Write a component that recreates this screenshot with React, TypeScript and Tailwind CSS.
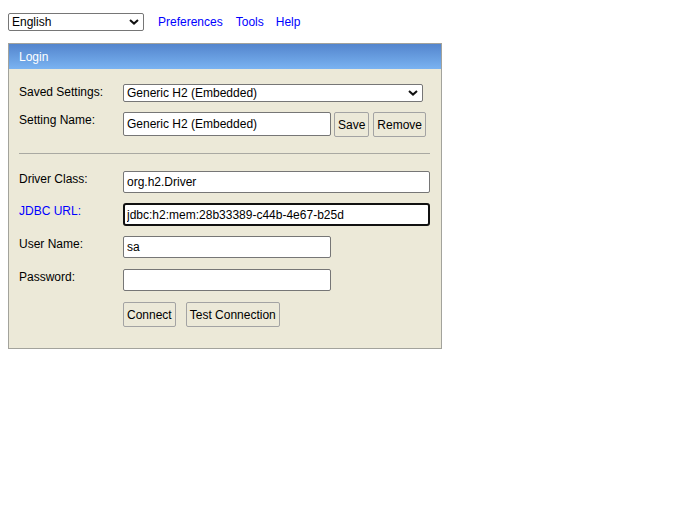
import { useState } from "react";

function Chevron() {
  return (
    <svg
      width="10"
      height="6"
      viewBox="0 0 10 6"
      className="pointer-events-none absolute right-[5px] top-1/2 -translate-y-1/2"
    >
      <path d="M1 1 L5 4.6 L9 1" fill="none" stroke="#111" strokeWidth="2" />
    </svg>
  );
}

function Select({ value, options, className }: { value: string; options: string[]; className: string }) {
  return (
    <div className={`relative ${className}`}>
      <select
        defaultValue={value}
        className="h-full w-full appearance-none rounded-[2px] border border-[#767676] bg-white pl-[3px] pr-5 text-[12px] leading-[14px] text-black outline-none"
      >
        {options.map((o) => (
          <option key={o}>{o}</option>
        ))}
      </select>
      <Chevron />
    </div>
  );
}

function Btn({ label }: { label: string }) {
  return (
    <button className="h-[25px] rounded-[2px] border border-[#a3a3a3] bg-[#ece9d8] px-[3px] text-[12px] leading-[14px] text-black">
      {label}
    </button>
  );
}

function Row({ label, blue, children, className }: { label: string; blue?: boolean; children: React.ReactNode; className?: string }) {
  return (
    <div className={`flex items-start ${className ?? ""}`}>
      <label className={`w-[104px] shrink-0 pt-[1px] text-[12px] leading-[14px] ${blue ? "text-[#0000ff]" : "text-black"}`}>
        {label}
      </label>
      {children}
    </div>
  );
}

export default function App() {
  const [name, setName] = useState("Generic H2 (Embedded)");
  const [driver, setDriver] = useState("org.h2.Driver");
  const [url, setUrl] = useState("jdbc:h2:mem:28b33389-c44b-4e67-b25d");
  const [user, setUser] = useState("sa");
  const [pass, setPass] = useState("");

  const inputCls =
    "h-[22px] rounded-[2px] border border-[#767676] bg-white px-[3px] text-[12px] leading-[14px] text-black outline-none";

  return (
    <div className="min-h-screen bg-white px-2 pt-[13px] font-['Liberation_Sans',Arial,sans-serif] text-[12px] leading-[14px]">
      {/* top bar */}
      <div className="flex items-center">
        <Select value="English" options={["English", "Deutsch", "Français", "Español"]} className="h-[18px] w-[136px]" />
        <a href="#" className="ml-[14px] text-[#0000ff]">Preferences</a>
        <a href="#" className="ml-[13px] text-[#0000ff]">Tools</a>
        <a href="#" className="ml-[12px] text-[#0000ff]">Help</a>
      </div>

      {/* login panel */}
      <div className="mt-[12px] w-[434px] border border-[#a3a39c] bg-[#ece9d8]">
        <div className="flex h-[25px] items-center bg-gradient-to-b from-[#5485cd] to-[#7ab3f1] px-[10px] text-white">
          Login
        </div>

        <div className="pl-[10px] pr-[11px] pt-[15px] pb-[21px]">
          <Row label="Saved Settings:">
            <Select
              value="Generic H2 (Embedded)"
              options={["Generic H2 (Embedded)", "Generic H2 (Server)", "Generic PostgreSQL", "Generic MySQL"]}
              className="h-[18px] w-[300px]"
            />
          </Row>

          <Row label="Setting Name:" className="mt-[10px]">
            <input value={name} onChange={(e) => setName(e.target.value)} className={`${inputCls} mt-0 h-[24px] w-[208px]`} />
            <div className="ml-[3px] flex gap-[4px]">
              <Btn label="Save" />
              <Btn label="Remove" />
            </div>
          </Row>

          <div className="mt-[16px] h-px w-[411px] bg-[#a9a9a2]" />

          <Row label="Driver Class:" className="mt-[17px]">
            <input value={driver} onChange={(e) => setDriver(e.target.value)} className={`${inputCls} w-[308px]`} />
          </Row>

          <Row label="JDBC URL:" blue className="mt-[10px]">
            <input
              value={url}
              onChange={(e) => setUrl(e.target.value)}
              className="h-[23px] w-[308px] rounded-[3px] border-2 border-[#111] bg-white px-[2px] text-[12px] leading-[14px] text-black outline-none"
            />
          </Row>

          <Row label="User Name:" className="mt-[10px]">
            <input value={user} onChange={(e) => setUser(e.target.value)} className={`${inputCls} w-[208px]`} />
          </Row>

          <Row label="Password:" className="mt-[11px]">
            <input type="password" value={pass} onChange={(e) => setPass(e.target.value)} className={`${inputCls} w-[208px]`} />
          </Row>

          <div className="mt-[11px] flex gap-[10px] pl-[104px]">
            <Btn label="Connect" />
            <Btn label="Test Connection" />
          </div>
        </div>
      </div>
    </div>
  );
}
